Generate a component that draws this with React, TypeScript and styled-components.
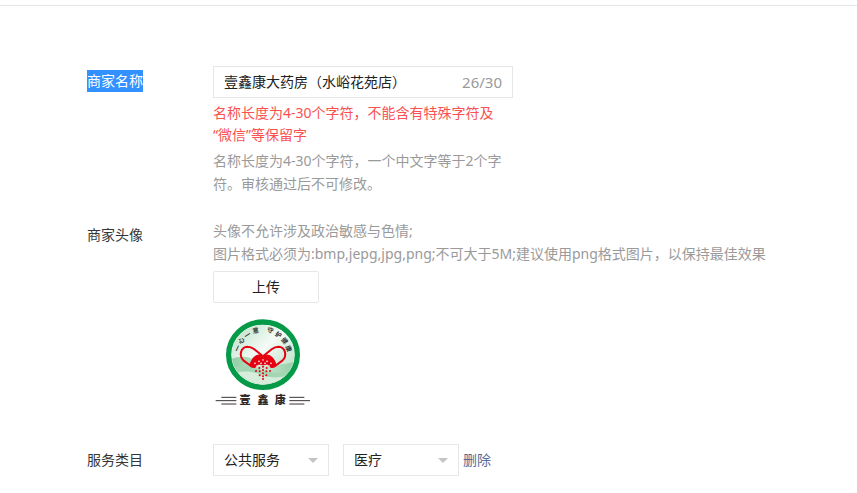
import React, { useState } from "react";
import styled, { createGlobalStyle } from "styled-components";

const GlobalStyle = createGlobalStyle`
  * { box-sizing: border-box; }
  body {
    margin: 0;
    background: #fff;
    color: #353535;
    font: 14px/22px "Noto Sans", "Noto Sans CJK SC", sans-serif;
  }
  button, input, select { font: inherit; color: inherit; }
`;

const Page = styled.div`
  padding-top: 5px;
`;

const Form = styled.form`
  display: flex;
  flex-direction: column;
  border-top: 1px solid #e7e7eb;
  padding: 60px 40px 16px 87px;
`;

const Row = styled.div<{ $gap?: number }>`
  display: grid;
  grid-template-columns: 126px minmax(0, 1fr);
  align-items: start;
  margin-bottom: ${(p) => p.$gap ?? 0}px;
`;

const Label = styled.label<{ $selected?: boolean }>`
  justify-self: start;
  margin-top: ${(p) => (p.$selected ? 4 : 5)}px;
  background: ${(p) => (p.$selected ? "#3390ff" : "transparent")};
  color: ${(p) => (p.$selected ? "#fff" : "inherit")};
`;

const Controls = styled.div`
  display: flex;
  flex-direction: column;
  align-items: flex-start;
`;

const NameBox = styled.div`
  display: flex;
  align-items: center;
  width: 100%;
  max-width: 300px;
  height: 32px;
  padding: 0 10px;
  border: 1px solid #e7e7eb;
`;

const NameInput = styled.input`
  flex: 1;
  min-width: 0;
  padding: 0;
  border: 0;
  outline: 0;
  background: none;
  color: #222;
`;

const Counter = styled.span`
  color: #9a9a9a;
  font-size: 15px;
`;

const Note = styled.p<{ $error?: boolean }>`
  margin: ${(p) => (p.$error ? 4 : 3)}px 0 0;
  max-width: 300px;
  color: ${(p) => (p.$error ? "#fa5151" : "#9a9a9a")};
  line-height: ${(p) => (p.$error ? 22 : 23)}px;
`;

const Hint = styled.p`
  margin: 0 0 6px;
  color: #9a9a9a;
  line-height: 23px;
`;

const UploadButton = styled.button`
  width: 106px;
  height: 32px;
  margin-bottom: 12px;
  border: 1px solid #e7e7eb;
  border-radius: 2px;
  background: #fff;
  color: #222;
`;

const Logo = styled.svg`
  display: block;
  width: 100px;
  height: 95px;
  font-family: "Noto Sans CJK SC", sans-serif;
  font-weight: 700;
`;

const Categories = styled.div`
  display: flex;
  align-items: center;
`;

const SelectBox = styled.div`
  display: grid;
  align-items: center;
  width: 116px;
  height: 32px;
  margin-right: 14px;
  & + & { margin-right: 4px; }
  & > * { grid-area: 1 / 1; }
`;

const Select = styled.select`
  appearance: none;
  width: 100%;
  height: 100%;
  padding: 0 24px 0 10px;
  border: 1px solid #e7e7eb;
  border-radius: 0;
  background: #fff;
  color: #222;
`;

const Caret = styled.svg`
  justify-self: end;
  margin-right: 11px;
  pointer-events: none;
`;

const RemoveLink = styled.a`
  color: #576b95;
  text-decoration: none;
`;

const ringText = [
  { c: "一", x: 97, y: 115, r: -66 },
  { c: "心", x: 109, y: 92, r: -50 },
  { c: "一", x: 127, y: 75, r: -32 },
  { c: "意", x: 152, y: 62, r: -12 },
  { c: "守", x: 196, y: 61, r: 15 },
  { c: "护", x: 220, y: 74, r: 33 },
  { c: "健", x: 239, y: 92, r: 50 },
  { c: "康", x: 251, y: 116, r: 68 },
];

const whiteDots = [
  [174, 150], [162, 154], [186, 154], [150, 160], [198, 160],
  [168, 160], [180, 160], [156, 168], [192, 168],
  [162, 166], [186, 166],
];

const redDots = [
  [174, 170], [163, 174], [185, 174], [153, 183], [195, 183],
  [174, 180], [164, 184], [184, 184], [174, 190], [164, 196],
  [184, 196], [174, 199], [174, 207],
];

function BrandLogo() {
  return (
    <Logo viewBox="24 15 300 285" role="img" aria-label="壹鑫康">
      <defs>
        <linearGradient id="sky" x1="0" y1="0" x2="1" y2="1">
          <stop offset="0" stopColor="#b2dcc0" />
          <stop offset="0.45" stopColor="#f4fbf6" />
          <stop offset="1" stopColor="#a5d6b4" />
        </linearGradient>
        <linearGradient id="hill" x1="0" y1="0" x2="1" y2="0">
          <stop offset="0" stopColor="#8fcca3" />
          <stop offset="0.5" stopColor="#c5e6ce" />
          <stop offset="1" stopColor="#93cda6" />
        </linearGradient>
        <clipPath id="disc">
          <ellipse cx="174" cy="134" rx="94" ry="89" />
        </clipPath>
      </defs>
      <ellipse cx="174" cy="134" rx="103" ry="98" fill="#fff" stroke="#049a48" strokeWidth="16" />
      <g clipPath="url(#disc)">
        <rect x="76" y="40" width="196" height="190" fill="url(#sky)" />
        <path d="M76 148Q112 133 146 147Q204 175 272 155V230H76Z" fill="url(#hill)" />
        <path d="M76 174Q120 160 162 178Q216 200 272 177V230H76Z" fill="#a5d6b3" />
        <path d="M92 188Q132 178 170 195Q204 208 245 198V230H92Z" fill="#d5edda" />
      </g>
      <g fill="#2b302c" fontSize="19" textAnchor="middle">
        {ringText.map((t, i) => (
          <text key={i} transform={`translate(${t.x} ${t.y}) rotate(${t.r})`} y="7">
            {t.c}
          </text>
        ))}
      </g>
      <g fill="none" stroke="#e50012" strokeWidth="6" strokeLinejoin="round">
        <path d="M138 168L115 151C101 137 107 111 127 110C137 110 142 113 147 117L174 139" />
        <path d="M210 168L233 151C247 137 241 111 221 110C211 110 206 113 201 117L174 139" />
      </g>
      <path
        d="M133 166Q138 145 153 136Q164 130 174 138Q184 130 195 136Q210 145 215 166Q211 176 198 174Q186 160 174 166Q162 160 150 174Q137 176 133 166Z"
        fill="#e50012"
      />
      {whiteDots.map(([x, y], i) => (
        <circle key={i} cx={x} cy={y} r="2.5" fill="#fff" />
      ))}
      {redDots.map(([x, y], i) => (
        <circle key={i} cx={x} cy={y} r="3" fill="#e50012" />
      ))}
      <path
        d="M49 262H94M32 272H94M49 282H94M253 262H298M253 272H315M253 282H298"
        stroke="#3a3432"
        strokeWidth="3"
      />
      <g fill="#302a28" fontSize="33" fontWeight="900" textAnchor="middle">
        <text x="120" y="283">壹</text>
        <text x="174" y="283">鑫</text>
        <text x="226" y="283">康</text>
      </g>
    </Logo>
  );
}

function DropDown({ id, label, options }: { id: string; label?: string; options: string[] }) {
  return (
    <SelectBox>
      <Select id={id} aria-label={label}>
        {options.map((o) => (
          <option key={o}>{o}</option>
        ))}
      </Select>
      <Caret width="10" height="5" viewBox="0 0 10 5" aria-hidden="true">
        <path d="M0 0H10L5 5Z" fill="#c4c4c4" />
      </Caret>
    </SelectBox>
  );
}

export default function App() {
  const [name, setName] = useState("壹鑫康大药房（水峪花苑店）");
  return (
    <>
      <GlobalStyle />
      <Page>
        <Form onSubmit={(e) => e.preventDefault()}>
          <Row $gap={24}>
            <Label htmlFor="name" $selected>商家名称</Label>
            <Controls>
              <NameBox>
                <NameInput id="name" value={name} onChange={(e) => setName(e.target.value)} />
                <Counter>{`${name.length * 2}/30`}</Counter>
              </NameBox>
              <Note $error>
                名称长度为4-30个字符，不能含有特殊字符及
                <br />
                “微信”等保留字
              </Note>
              <Note>名称长度为4-30个字符，一个中文字等于2个字符。审核通过后不可修改。</Note>
            </Controls>
          </Row>
          <Row $gap={34}>
            <Label htmlFor="upload">商家头像</Label>
            <Controls>
              <Hint>
                头像不允许涉及政治敏感与色情;
                <br />
                图片格式必须为:bmp,jepg,jpg,png;不可大于5M;建议使用png格式图片，以保持最佳效果
              </Hint>
              <UploadButton id="upload" type="button">上传</UploadButton>
              <BrandLogo />
            </Controls>
          </Row>
          <Row>
            <Label htmlFor="category">服务类目</Label>
            <Categories>
              <DropDown id="category" options={["公共服务"]} />
              <DropDown id="subcategory" label="二级服务类目" options={["医疗"]} />
              <RemoveLink href="#">删除</RemoveLink>
            </Categories>
          </Row>
        </Form>
      </Page>
    </>
  );
}
